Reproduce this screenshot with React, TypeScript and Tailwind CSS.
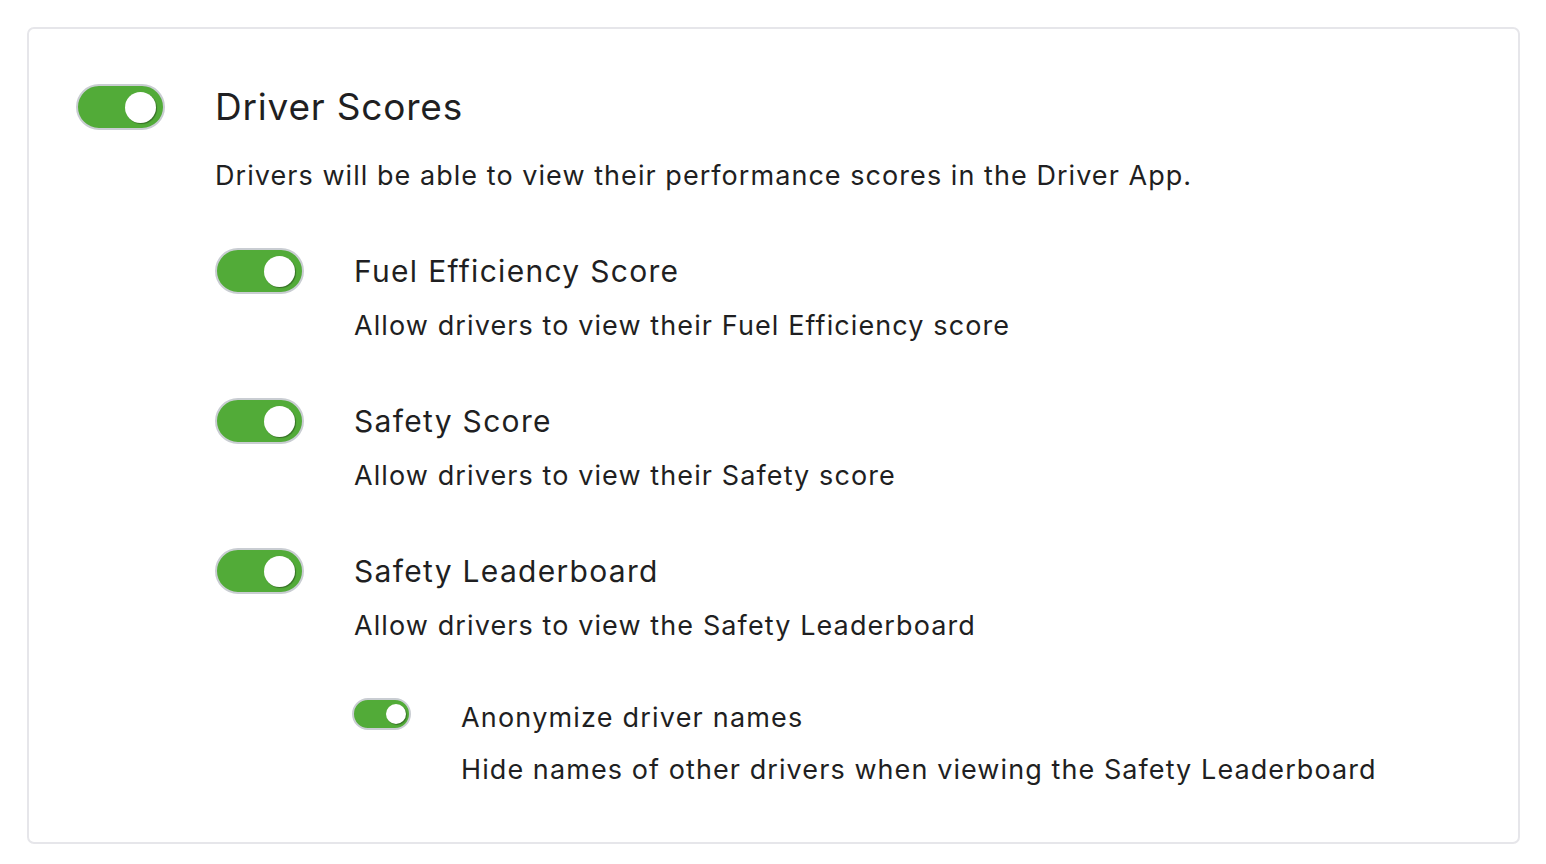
type ToggleProps = {
  size?: "lg" | "sm";
};

function Toggle({ size = "lg" }: ToggleProps) {
  if (size === "sm") {
    return (
      <div className="flex h-[32px] w-[59px] shrink-0 items-center justify-end rounded-full border-2 border-[#c9cdd2] bg-[#52ab38] pr-[3px]">
        <div className="h-[20px] w-[20px] rounded-full bg-white shadow-[1px_1px_1px_rgba(0,0,0,0.35)]" />
      </div>
    );
  }
  return (
    <div className="flex h-[46px] w-[89px] shrink-0 items-center justify-end rounded-full border-2 border-[#c9cdd2] bg-[#52ab38] pr-[7px]">
      <div className="h-[31px] w-[31px] rounded-full bg-white shadow-[1px_1px_1px_rgba(0,0,0,0.35)]" />
    </div>
  );
}

const subSettings = [
  { title: "Fuel Efficiency Score", desc: "Allow drivers to view their Fuel Efficiency score" },
  { title: "Safety Score", desc: "Allow drivers to view their Safety score" },
  { title: "Safety Leaderboard", desc: "Allow drivers to view the Safety Leaderboard" },
];

export default function App() {
  return (
    <div className="min-h-screen bg-white p-[27px_26px_20px_27px] font-['Inter',sans-serif] text-[#1f1f22]">
      <div className="rounded-[7px] border-2 border-[#e6e6ea] pb-[54px] pl-[47px] pt-[55px]">
        <div className="flex gap-[50px]">
          <Toggle />
          <div className="flex-1">
            <div className="flex h-[46px] items-center text-[37px] tracking-[0.8px]">Driver Scores</div>
            <p className="mt-[26px] text-[27px] leading-[40px] tracking-[1.05px]">
              Drivers will be able to view their performance scores in the Driver App.
            </p>

            <div className="mt-[52px] flex flex-col gap-[54px]">
              {subSettings.map((s) => (
                <div key={s.title} className="flex gap-[50px]">
                  <Toggle />
                  <div>
                    <div className="flex h-[46px] items-center text-[30px] tracking-[1.3px]">{s.title}</div>
                    <p className="mt-[14px] text-[27px] leading-[36px] tracking-[1.1px]">{s.desc}</p>
                  </div>
                </div>
              ))}
            </div>

            <div className="ml-[137px] mt-[54px] flex gap-[50px]">
              <Toggle size="sm" />
              <div>
                <div className="flex h-[40px] items-center text-[27px] tracking-[1.2px]">Anonymize driver names</div>
                <p className="mt-[14px] text-[27px] leading-[36px] tracking-[1.08px]">
                  Hide names of other drivers when viewing the Safety Leaderboard
                </p>
              </div>
            </div>
          </div>
        </div>
      </div>
    </div>
  );
}
